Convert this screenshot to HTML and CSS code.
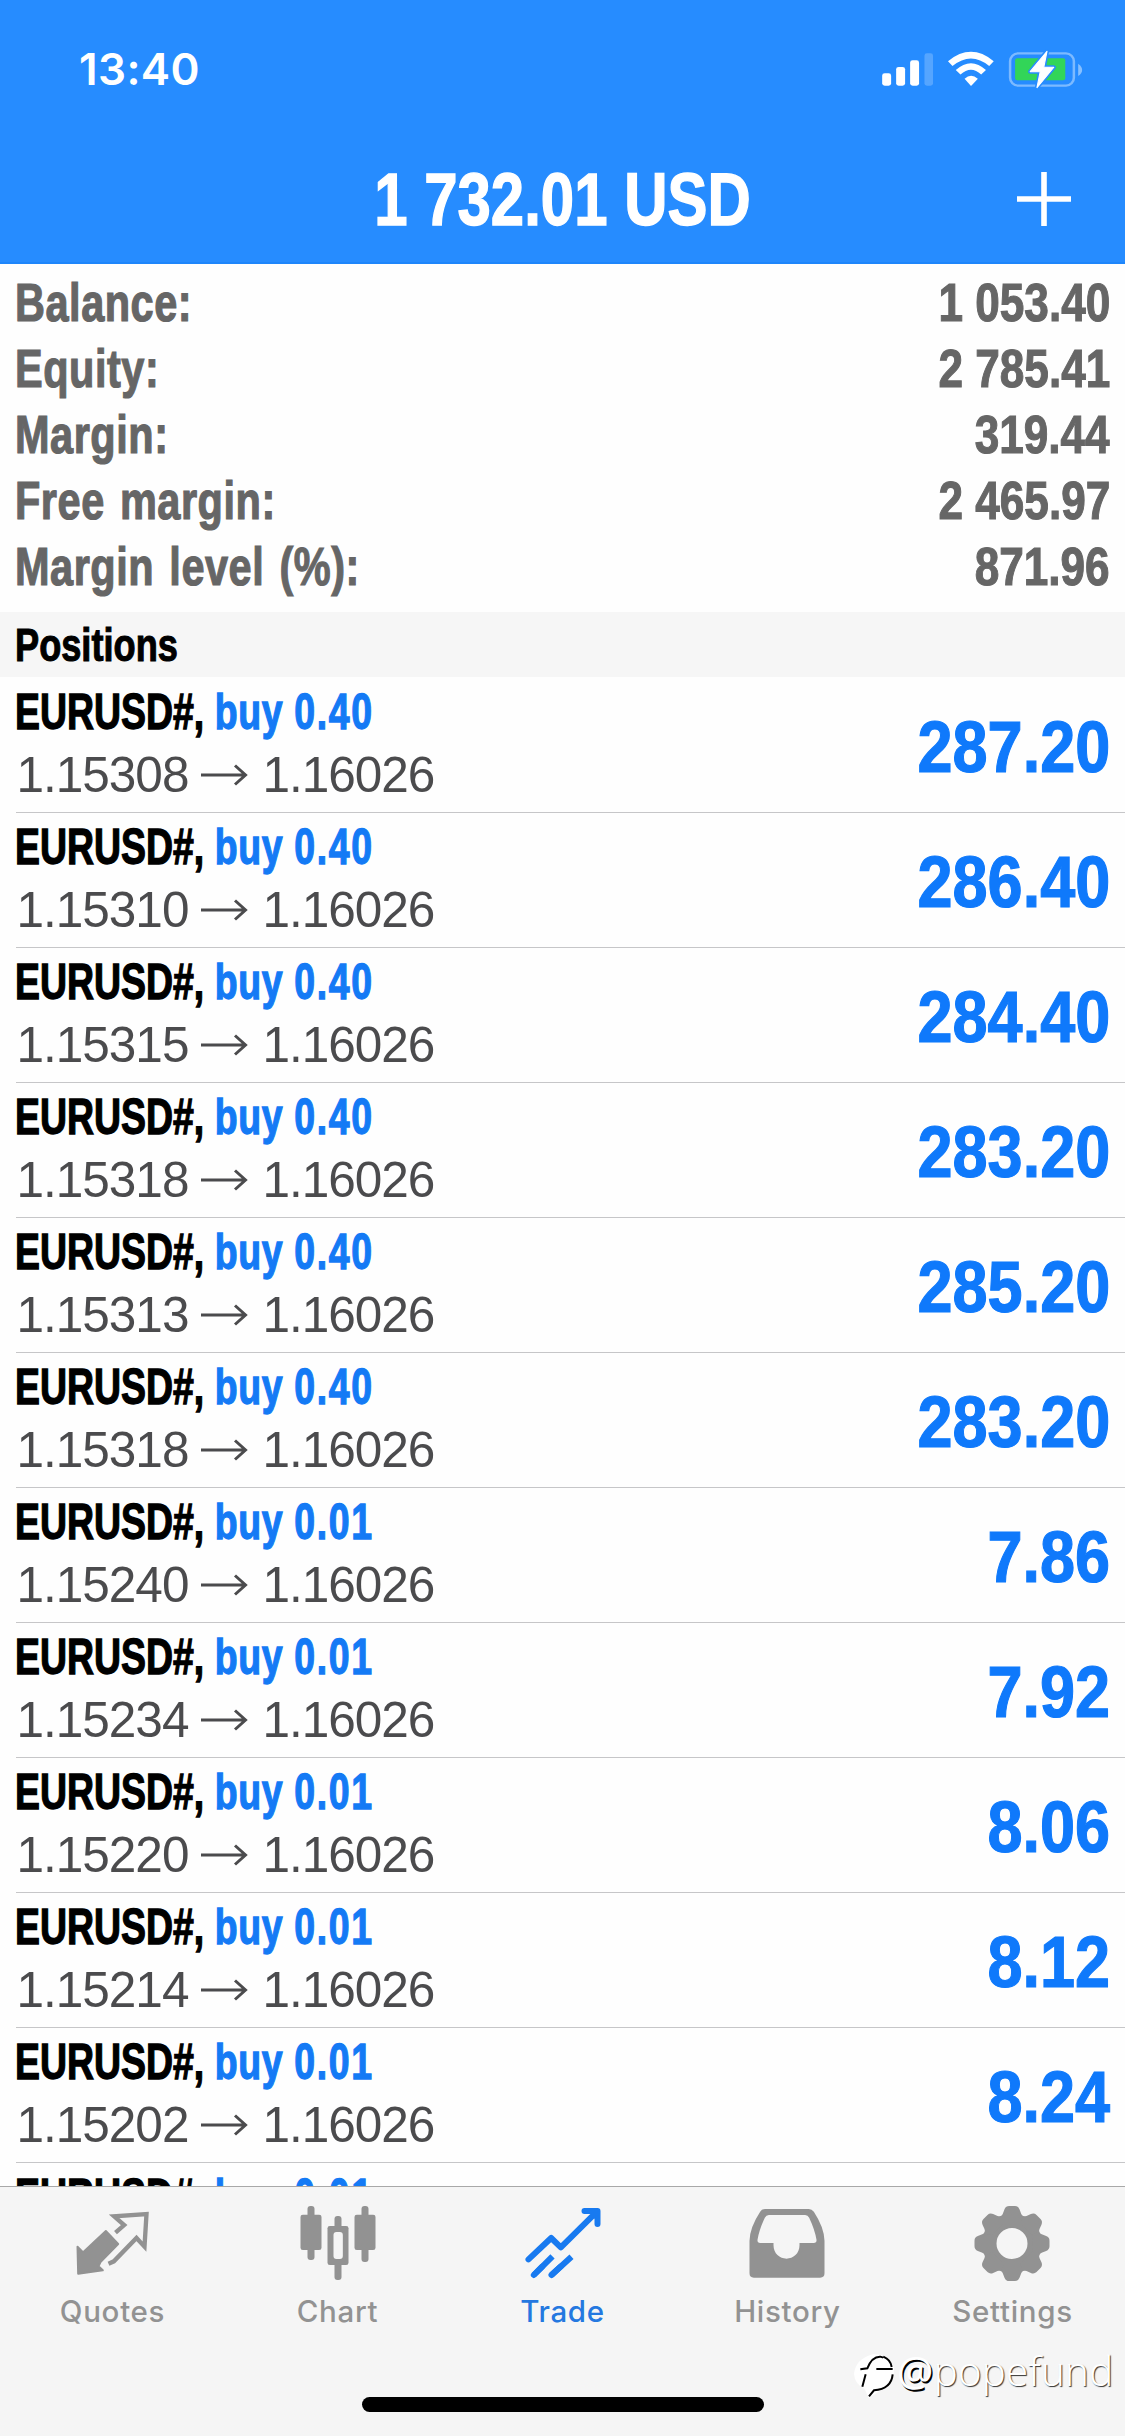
FILE: index.html
```html
<!DOCTYPE html>
<html lang="en">
<head>
<meta charset="utf-8">
<title>Trade</title>
<link rel="stylesheet" href="styles.css">
</head>
<body>
<div class="screen">
  <header class="header">
    <div class="status">
      <span class="time">13:40</span>
      <svg class="status-icons" viewBox="870 140 600 130" preserveAspectRatio="none">
        <g fill="#fff">
          <rect x="890" y="219" width="25" height="37" rx="7"/>
          <rect x="929" y="200" width="25" height="56" rx="7"/>
          <rect x="968" y="180" width="25" height="76" rx="7"/>
          <rect x="1008" y="159" width="24" height="97" rx="7" opacity=".22"/>
          <path d="M1120 235Q1138 218 1157 235L1138 257Z"/>
        </g>
        <g fill="none" stroke="#fff" stroke-width="19">
          <path d="M1080 190Q1138 139 1195 190"/>
          <path d="M1102 216Q1138 181 1173 216"/>
        </g>
        <rect x="1247" y="159" width="178" height="97" rx="22" ry="24" fill="none" stroke="#fff" stroke-opacity=".4" stroke-width="7"/>
        <path d="M1437 190Q1448 198 1448 209T1437 227Z" fill="#fff" opacity=".45"/>
        <rect x="1261" y="174" width="140" height="66" rx="6" fill="#32d558"/>
        <path d="M1350 153L1303 214H1331L1322 262L1369 201H1341Z" fill="#fff" stroke="#268cff" stroke-width="12" stroke-linejoin="round"/>
        <path d="M1350 153L1303 214H1331L1322 262L1369 201H1341Z" fill="#fff" stroke="#fff" stroke-width="3" stroke-linejoin="round"/>
      </svg>
    </div>
    <div class="nav">
      <h1 class="profit">1 732.01 USD</h1>
      <svg class="add" viewBox="0 0 54 54"><path d="M27 0V54M0 27H54" stroke="#fff" stroke-width="5.6"/></svg>
    </div>
  </header>

  <section class="summary">
    <div class="summary-row"><span class="label">Balance:</span><span class="amount">1 053.40</span></div>
    <div class="summary-row"><span class="label">Equity:</span><span class="amount">2 785.41</span></div>
    <div class="summary-row"><span class="label">Margin:</span><span class="amount">319.44</span></div>
    <div class="summary-row"><span class="label">Free margin:</span><span class="amount">2 465.97</span></div>
    <div class="summary-row"><span class="label">Margin level (%):</span><span class="amount">871.96</span></div>
  </section>

  <h2 class="section-title"><span class="section-text">Positions</span></h2>

  <main class="positions" id="positions"></main>

  <footer class="tabbar">
    <nav class="tabs">
      <div class="tab">
        <svg class="tab-icon" viewBox="202.5 210 270 270">
          <path fill="#929292" stroke="#929292" stroke-width="6" stroke-linejoin="round" d="M316 303L353 342L300 396L294 409L307 421L233 431L231 350L248 367Z"/>
          <path fill="none" stroke="#929292" stroke-width="13" d="M345 308L371 285L341 259L438 252L432 350L408 324L340 394L324 401"/>
        </svg>
        <span>Quotes</span>
      </div>
      <div class="tab">
        <svg class="tab-icon" viewBox="877.5 210 270 270">
          <g fill="#929292">
            <rect x="921" y="228" width="21" height="162" rx="9"/>
            <rect x="900" y="254" width="63" height="106" rx="7"/>
            <rect x="1083" y="228" width="21" height="168" rx="9"/>
            <rect x="1062" y="254" width="63" height="106" rx="7"/>
            <rect x="1002" y="258" width="21" height="192" rx="9"/>
            <rect x="981" y="288" width="63" height="117" rx="7"/>
          </g>
          <rect x="999" y="306" width="28" height="81" rx="9" fill="#f5f5f5"/>
        </svg>
        <span>Chart</span>
      </div>
      <div class="tab active">
        <svg class="tab-icon" viewBox="352.5 210 270 270">
          <g fill="none" stroke="#187af0" stroke-width="18" stroke-linecap="round" stroke-linejoin="round">
            <path d="M384 388L452 324L481 352L590 244M552 243H591V282M578 250L588 260"/>
            <path stroke-linecap="butt" d="M400 435L456 379M453 435L513 380"/>
            <path d="M400 435L425 410M453 435L480 410"/>
          </g>
        </svg>
        <span>Trade</span>
      </div>
      <div class="tab">
        <svg class="tab-icon" viewBox="127.5 210 270 270">
          <path fill="#929292" fill-rule="evenodd" d="M194 237H325Q334 237 340 245Q371 292 372 332V430Q372 443 359 443H160Q147 443 147 430V332Q148 292 179 245Q185 237 194 237ZM205 255Q197 255 193 263Q176 299 171 329Q170 339 179 339H219V346C219 371 238 386 258 386S297 371 297 346V339H340Q349 339 348 329Q343 299 326 263Q322 255 314 255Z"/>
        </svg>
        <span>History</span>
      </div>
      <div class="tab">
        <svg class="tab-icon" viewBox="802.5 210 270 270">
          <g fill="#929292">
            <circle cx="934.500" cy="340.500" r="68" fill="none" stroke="#929292" stroke-width="43"/>
            <g id="cog">
              <path d="M900 262Q908 253 912 238Q916 228 926 228H943Q953 228 957 238Q961 253 969 262L960 280H909Z"/>
              <path d="M900 419Q908 428 912 443Q916 453 926 453H943Q953 453 957 443Q961 428 969 419L960 401H909Z"/>
            </g>
            <use href="#cog" transform="rotate(45 934.5 340.5)"/>
            <use href="#cog" transform="rotate(90 934.5 340.5)"/>
            <use href="#cog" transform="rotate(135 934.5 340.5)"/>
          </g>
        </svg>
        <span>Settings</span>
      </div>
    </nav>
    <div class="home-indicator"></div>
  </footer>

  <div class="watermark">
    <svg class="watermark-logo" viewBox="455 660 132 150">
      <path fill="#fff" d="M458 735Q462 690 515 676Q560 672 578 715Q580 760 545 780L502 808L490 780Q460 765 458 735Z"/>
      <path fill="none" stroke="#000" stroke-width="6" d="M477 721L498 718Q512 682 537 683L546 686M525 720H574M493 736L483 773M574 736Q570 780 518 784L503 802M546 683Q568 692 571 714"/>
    </svg>
    <span><b class="at">@</b>popefund</span>
  </div>
</div>
<script src="positions.js"></script>
</body>
</html>
```
FILE: positions.js
```js
const positions = [
  ["0.40", "1.15308", "287.20"],
  ["0.40", "1.15310", "286.40"],
  ["0.40", "1.15315", "284.40"],
  ["0.40", "1.15318", "283.20"],
  ["0.40", "1.15313", "285.20"],
  ["0.40", "1.15318", "283.20"],
  ["0.01", "1.15240", "7.86"],
  ["0.01", "1.15234", "7.92"],
  ["0.01", "1.15220", "8.06"],
  ["0.01", "1.15214", "8.12"],
  ["0.01", "1.15202", "8.24"],
  ["0.01", "", ""]
];

document.getElementById("positions").innerHTML = positions.map(([lots, open, profit]) => `
  <article class="position">
    <div class="details">
      <div class="symbol">EURUSD#, <span class="side">buy <span class="lots">${lots}</span></span></div>
      ${open && `<div class="prices"><span>${open}</span>
        <svg class="arrow" viewBox="0 0 74 30"><path d="M13 15H57M47 5.500L57.500 15L47 24.500" fill="none" stroke="#4b4b4d" stroke-width="3"/></svg>
        <span>1.16026</span></div>`}
    </div>
    <div class="value">${profit}</div>
  </article>`).join("");
```
FILE: styles.css
```css
* { box-sizing: border-box; }

body {
  margin: 0;
  background: #fff;
  font-family: "Liberation Sans", Arial, sans-serif;
  font-kerning: none;
}

.screen {
  position: relative;
  display: flex;
  flex-direction: column;
  width: 1125px;
  height: 2436px;
  overflow: hidden;
  background: #fefefe;
}

.header {
  flex: none;
  height: 264px;
  background: #268cff;
  border-bottom: 2px solid #1e86fb;
  color: #fff;
}

.status {
  display: flex;
  justify-content: space-between;
  height: 132px;
  padding: 42px 35px 0 79px;
}

.time {
  font: 600 44px/54px Inter, sans-serif;
  letter-spacing: 0.4px;
}

.status-icons {
  width: 215px;
  height: 43.3px;
  margin-top: 4.7px;
}

.nav {
  display: grid;
  grid-template-columns: 1fr auto 1fr;
  align-items: center;
  height: 132px;
  padding-right: 54px;
  padding-left: 54px;
}

.profit {
  grid-column: 2;
  margin: 2px 0 0;
  font-size: 74px;
  line-height: 132px;
  white-space: nowrap;
  transform: scaleX(0.81);
  -webkit-text-stroke: 1.4px;
}

.add {
  justify-self: end;
  width: 54px;
  height: 54px;
}

.summary {
  flex: none;
  height: 348px;
  padding: 6px 15px 0 15px;
  color: #666;
  font-size: 53.5px;
  font-weight: 700;
  line-height: 66px;
}

.summary-row {
  display: flex;
  justify-content: space-between;
}

.label {
  letter-spacing: 0.7px;
  word-spacing: 4px;
  transform: scaleX(0.775);
  transform-origin: left;
  -webkit-text-stroke: 1.2px;
}

.amount {
  transform: scaleX(0.825);
  transform-origin: right;
  -webkit-text-stroke: 1.1px;
}

.section-title {
  flex: none;
  height: 65px;
  margin: 0;
  padding-left: 15px;
  background: #f6f6f6;
  color: #000;
  font-size: 47px;
  line-height: 65px;
}

.section-text {
  display: inline-block;
  transform: scaleX(0.77);
  transform-origin: left;
  -webkit-text-stroke: 1.1px;
}

.positions {
  flex: 1;
  min-height: 0;
  padding-top: 1px;
  overflow: hidden;
}

.position {
  display: flex;
  justify-content: space-between;
  height: 135px;
  margin-left: 16px;
  padding: 3px 15px 0 0;
  border-bottom: 1px solid #c6c6c8;
}

.details { margin-left: -1px; }

.symbol {
  color: #000;
  font-size: 49.5px;
  font-weight: 700;
  line-height: 62px;
  white-space: nowrap;
  transform: scaleX(0.756);
  transform-origin: left;
  -webkit-text-stroke: 1.3px;
}

.side { color: #147af5; letter-spacing: 0.9px; }
.lots { letter-spacing: 2.2px; }

.prices {
  display: flex;
  align-items: center;
  padding-left: 1.5px;
  color: #4b4b4d;
  font-size: 49.5px;
  line-height: 64px;
  letter-spacing: -1px;
}

.arrow {
  width: 74px;
  height: 30px;
}

.value {
  color: #0f79fb;
  font-size: 72px;
  font-weight: 700;
  line-height: 132px;
  transform: scaleX(0.875);
  transform-origin: right;
  -webkit-text-stroke: 1.2px;
}

.tabbar {
  flex: none;
  display: flex;
  flex-direction: column;
  align-items: center;
  height: 250px;
  padding-bottom: 24px;
  border-top: 1px solid #a8a8a8;
  background: #f5f5f5;
}

.tabs {
  display: grid;
  grid-template-columns: repeat(5, 1fr);
  width: 100%;
}

.tab {
  display: flex;
  flex-direction: column;
  align-items: center;
  padding-top: 13px;
  color: #929292;
  font: 500 29.5px/36px Inter, sans-serif;
  letter-spacing: 0.7px;
}

.tab.active { color: #2478e0; }

.tab-icon {
  width: 90px;
  height: 90px;
  margin-bottom: 3px;
}

.home-indicator {
  width: 402px;
  height: 15px;
  margin-top: auto;
  border-radius: 8px;
  background: #000;
}

.watermark {
  position: absolute;
  top: 2346px;
  left: 853px;
  display: flex;
  color: #fff;
  font: 300 40.5px/50px "Noto Sans", sans-serif;
  text-shadow: 1px 1px 1px #333;
}

.watermark-logo {
  width: 44px;
  height: 50px;
  margin-top: 3px;
}

.at {
  font-weight: 400;
  text-shadow: 1.5px 1.5px 0 #000;
}
```
